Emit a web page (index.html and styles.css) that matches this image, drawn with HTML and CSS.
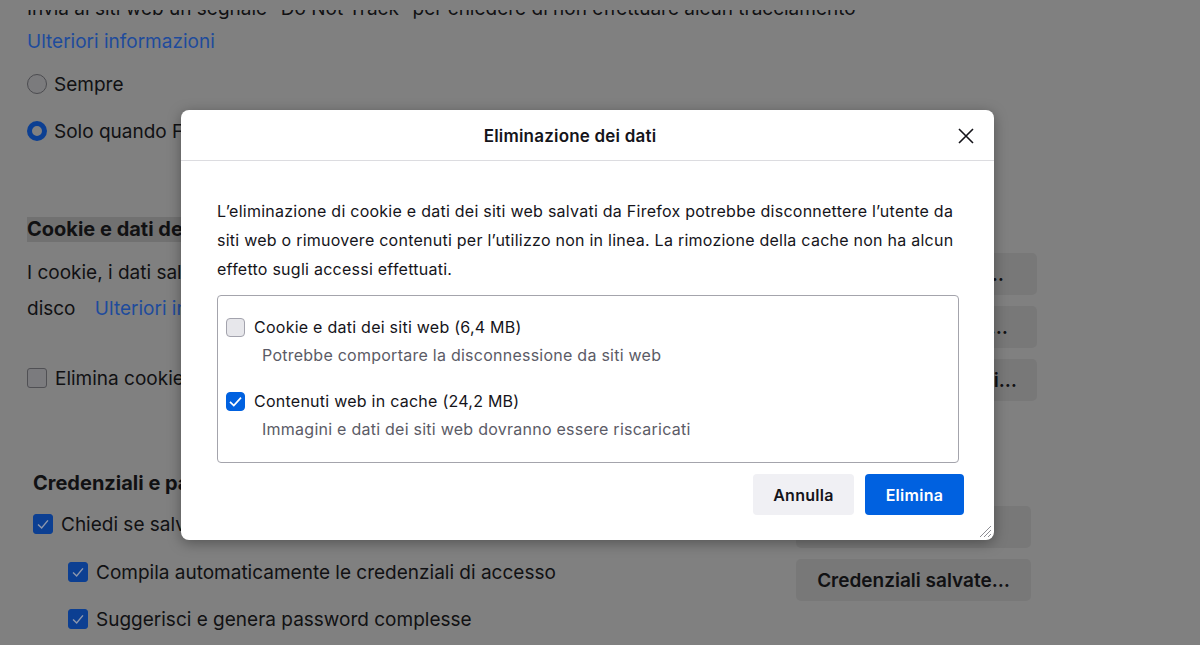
FILE: index.html
```html
<!DOCTYPE html>
<html lang="it">
<head>
<meta charset="utf-8">
<title>Eliminazione dei dati</title>
<link rel="stylesheet" href="styles.css">
</head>
<body>
<div class="page">
  <div class="top-clip">
    <p class="line-top">Invia ai siti web un segnale “Do Not Track” per chiedere di non effettuare alcun tracciamento</p>
  </div>
  <a class="link link-row">Ulteriori informazioni</a>
  <div class="radio-row r1"><span class="radio"></span>Sempre</div>
  <div class="radio-row r2"><span class="radio on"></span>Solo quando Firefox è impostato per bloccare gli elementi traccianti</div>

  <section class="cookies">
    <div class="col-main">
      <h2 class="hl">Cookie e dati dei siti web</h2>
      <p class="cookies-text">I cookie, i dati salvati dai siti web e la cache occupano attualmente 30,6 MB di spazio su<br>disco <a class="link gap-link">Ulteriori informazioni</a></p>
      <div class="check-row cr-cookie"><span class="bcheck"></span>Elimina cookie e dati dei siti web alla chiusura di Firefox</div>
    </div>
    <div class="side-buttons">
      <button class="side-btn pad-l">Elimina dati…</button>
      <button class="side-btn pad-m">Gestisci dati…</button>
      <button class="side-btn">Gestisci eccezioni…</button>
    </div>
  </section>

  <section class="logins">
    <h2 class="logins-title">Credenziali e password</h2>
    <div class="logins-grid">
      <div class="col-main">
        <div class="check-row cr-ask"><span class="bcheck on"><svg viewBox="0 0 20 20"><path d="M4.5 10.5 L8.5 14.5 L15.5 6" /></svg></span>Chiedi se salvare le credenziali di accesso ai siti web</div>
        <div class="check-row cr-sub cr-fill"><span class="bcheck on"><svg viewBox="0 0 20 20"><path d="M4.5 10.5 L8.5 14.5 L15.5 6" /></svg></span>Compila automaticamente le credenziali di accesso</div>
        <div class="check-row cr-sub cr-gen"><span class="bcheck on"><svg viewBox="0 0 20 20"><path d="M4.5 10.5 L8.5 14.5 L15.5 6" /></svg></span>Suggerisci e genera password complesse</div>
      </div>
      <div class="side-buttons side-logins">
        <button class="side-btn wide">Eccezioni…</button>
        <button class="side-btn wide">Credenziali salvate…</button>
      </div>
    </div>
  </section>
</div>

<div class="dialog">
  <header class="dlg-head">
    <h1 class="dlg-title">Eliminazione dei dati</h1>
    <button class="close" aria-label="Chiudi"><svg viewBox="0 0 24 24"><path d="M5 5 L19 19 M19 5 L5 19" /></svg></button>
  </header>
  <div class="dlg-body">
    <p class="dlg-text">L’eliminazione di cookie e dati dei siti web salvati da Firefox potrebbe disconnettere l’utente da siti web o rimuovere contenuti per l’utilizzo non in linea. La rimozione della cache non ha alcun effetto sugli accessi effettuati.</p>
    <div class="options">
      <div class="opt">
        <div class="opt-row"><span class="cb"></span>Cookie e dati dei siti web (6,4 MB)</div>
        <div class="opt-desc">Potrebbe comportare la disconnessione da siti web</div>
      </div>
      <div class="opt opt2">
        <div class="opt-row"><span class="cb on"><svg viewBox="0 0 19 19"><path d="M4 9.8 L7.8 13.6 L15 5.6" /></svg></span>Contenuti web in cache (24,2 MB)</div>
        <div class="opt-desc">Immagini e dati dei siti web dovranno essere riscaricati</div>
      </div>
    </div>
    <div class="actions">
      <button class="btn">Annulla</button>
      <button class="btn primary">Elimina</button>
    </div>
  </div>
  <svg class="grip" viewBox="0 0 14 14"><path d="M13 2 L2 13 M13 6 L6 13 M13 10 L10 13" /></svg>
</div>
</body>
</html>
```

FILE: styles.css
```css
* { box-sizing: border-box; }

html, body {
  margin: 0;
  height: 100%;
}

body {
  background: #808080;
  font-family: Inter, "Noto Sans", "Liberation Sans", sans-serif;
  color: #111113;
  overflow: hidden;
  position: relative;
}

p, h1, h2 { margin: 0; }

button {
  font-family: inherit;
  border: none;
  cursor: default;
}

/* ---------- background page (dimmed) ---------- */
.page {
  width: 1037px;
  padding-left: 27px;
  font-size: 19px;
}

.top-clip {
  margin-top: 10px;
  height: 12px;
  overflow: hidden;
}

.line-top {
  margin-top: -13px;
  line-height: 24px;
  white-space: nowrap;
}

.link {
  color: #1e4b9c;
  text-decoration: none;
}

.link-row {
  display: block;
  margin-top: 8px;
  line-height: 24px;
}

.radio-row {
  display: flex;
  align-items: center;
  gap: 7px;
  height: 24px;
  white-space: nowrap;
}
.r1 { margin-top: 18px; }
.r2 { margin-top: 23px; }

.radio {
  width: 20px;
  height: 20px;
  border-radius: 50%;
  border: 1.5px solid #4c4c50;
  background: #7b7b7d;
  flex: none;
}
.radio.on {
  border: 5px solid #0c3f92;
  background: #808080;
}

.col-main {
  min-width: 0;
  overflow: hidden;
  white-space: nowrap;
}

.cookies {
  margin-top: 74px;
  display: grid;
  grid-template-columns: minmax(0, 1fr) 236px;
  column-gap: 14px;
  align-items: start;
}

.hl {
  font-size: 20px;
  font-weight: 700;
  line-height: 25px;
  height: 25px;
  background: #717171;
}

.cookies-text {
  margin-top: 13px;
  line-height: 36px;
}

.gap-link { margin-left: 14px; }

.check-row {
  display: flex;
  align-items: center;
  gap: 8px;
  height: 24px;
}
.cr-cookie { margin-top: 39px; }

.bcheck {
  width: 20px;
  height: 20px;
  border-radius: 3px;
  border: 1.5px solid #505054;
  background: #7b7b7e;
  flex: none;
  display: flex;
  align-items: center;
  justify-content: center;
}
.bcheck.on {
  background: #0c3f92;
  border-color: #0c3f92;
}
.bcheck svg {
  width: 20px;
  height: 20px;
  fill: none;
  stroke: #8d97ad;
  stroke-width: 1.6;
}

.side-buttons {
  display: flex;
  flex-direction: column;
  gap: 11px;
  margin-top: 36px;
}

.side-btn {
  height: 42px;
  border-radius: 5px;
  background: #787878;
  color: #111113;
  font-size: 19px;
  font-weight: 600;
  text-align: right;
  padding: 0 20px;
  white-space: nowrap;
  overflow: hidden;
}
.side-btn.pad-l { padding-right: 33px; }
.side-btn.pad-m { padding-right: 29px; }
.side-btn.wide { text-align: center; padding: 0 10px; }

.logins {
  margin-top: 70px;
  margin-left: 6px;
  width: 998px;
}

.logins-title {
  font-size: 20px;
  font-weight: 700;
  line-height: 24px;
}

.logins-grid {
  display: grid;
  grid-template-columns: minmax(0, 1fr) 235px;
  column-gap: 20px;
  align-items: start;
}

.side-logins { margin-top: 11px; }

.cr-ask { margin-top: 17px; }
.cr-sub { margin-left: 35px; }
.cr-fill { margin-top: 24px; }
.cr-gen { margin-top: 23px; }

/* ---------- dialog ---------- */
.dialog {
  position: absolute;
  left: 181px;
  top: 110px;
  width: 813px;
  background: #ffffff;
  border-radius: 8px;
  box-shadow: 0 3px 14px rgba(0, 0, 0, 0.35);
  color: #15141a;
}

.dlg-head {
  display: flex;
  align-items: center;
  height: 51px;
  padding-top: 1px;
  border-bottom: 1px solid #dcdce0;
}

.dlg-title {
  flex: 1;
  text-align: center;
  padding-left: 5px;
  font-size: 17px;
  font-weight: 600;
  letter-spacing: 0.2px;
}

.close {
  width: 24px;
  height: 24px;
  padding: 0;
  margin-right: 16px;
  background: transparent;
  display: flex;
}
.close svg {
  width: 24px;
  height: 24px;
  fill: none;
  stroke: #15141a;
  stroke-width: 1.6;
}

.dlg-body {
  padding: 36px 30px 25px 36px;
  font-size: 16px;
  letter-spacing: 0.25px;
}

.dlg-text {
  line-height: 29px;
  padding-right: 5px;
}

.options {
  margin-top: 11px;
  margin-right: 5px;
  border: 1px solid #a4a4ac;
  border-radius: 4px;
  padding: 21px 8px 23px;
}

.opt-row {
  display: flex;
  align-items: center;
  gap: 9px;
  height: 20px;
}

.opt2 { margin-top: 26px; }

.cb {
  width: 19px;
  height: 19px;
  border-radius: 4px;
  border: 1px solid #a3a3ad;
  background: #e7e7eb;
  flex: none;
  display: flex;
}
.cb.on {
  background: #0061e0;
  border-color: #0061e0;
}
.cb svg {
  width: 19px;
  height: 19px;
  margin: -1px;
  fill: none;
  stroke: #ffffff;
  stroke-width: 1.7;
}

.opt-desc {
  margin-top: 8px;
  padding-left: 36px;
  line-height: 20px;
  color: #5b5b66;
}

.actions {
  margin-top: 11px;
  display: flex;
  justify-content: flex-end;
  gap: 11px;
}

.btn {
  height: 41px;
  border-radius: 4px;
  background: #f0f0f4;
  color: #15141a;
  font-size: 16px;
  font-weight: 600;
  letter-spacing: 0.3px;
  min-width: 101px;
  padding: 0 20px;
}
.btn.primary {
  background: #0061e0;
  color: #ffffff;
  min-width: 99px;
}

.grip {
  position: absolute;
  right: 2px;
  bottom: 2px;
  width: 14px;
  height: 14px;
  fill: none;
  stroke: #8e8e94;
  stroke-width: 1;
}
```
